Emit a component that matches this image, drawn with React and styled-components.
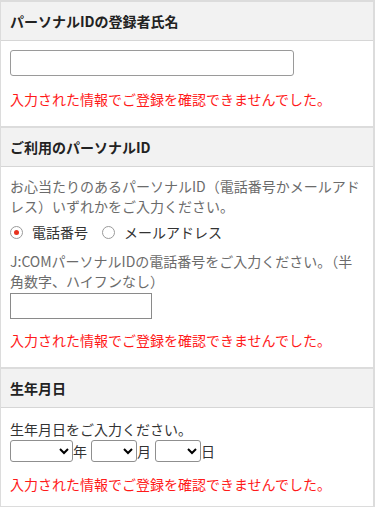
import React from "react";
import styled, { createGlobalStyle } from "styled-components";

const Global = createGlobalStyle`
  html, body { margin: 0; padding: 0; background: #fff; }
  body { font-family: "Noto Sans CJK JP", "Noto Sans", sans-serif; }
  * { box-sizing: border-box; }
`;

const Page = styled.div`
  width: 375px;
  border-left: 1px solid #dcdcdc;
  border-right: 2px solid #dcdcdc;
  border-bottom: 2px solid #dcdcdc;
`;

const Section = styled.section`
  border-top: 2px solid #dcdcdc;
  background: #fff;
`;

const Header = styled.h2`
  margin: 0;
  height: 39px;
  padding: 0 9px;
  display: flex;
  align-items: center;
  background: #f2f2f2;
  border-bottom: 1px solid #d6d6d6;
  font-size: 14px;
  font-weight: 700;
  color: #222;
  line-height: 20px;
`;

const Body = styled.div`
  padding: ${(p) => p.$pad || "9px 9px 16px"};
`;

const Note = styled.p`
  margin: 0;
  font-size: 14px;
  line-height: 20px;
  color: ${(p) => (p.$dark ? "#333" : "#6b6b6b")};
`;

const Error = styled.p`
  margin: ${(p) => p.$mt || "12px"} 0 0;
  font-size: 14px;
  line-height: 20px;
  color: #ff1a1a;
`;

const TextInput = styled.input`
  display: block;
  width: ${(p) => p.$w}px;
  height: 26px;
  margin: ${(p) => p.$mt || 0}px 0 0;
  padding: 2px 6px;
  border: 1px solid ${(p) => (p.$square ? "#8a8a8a" : "#9a9a9a")};
  border-radius: ${(p) => (p.$square ? "0" : "3px")};
  background: #fff;
  font-size: 14px;
  outline: none;
`;

const RadioRow = styled.div`
  display: flex;
  align-items: center;
  gap: 14px;
  height: 30px;
  margin: 1px 0 4px;
`;

const RadioLabel = styled.label`
  display: flex;
  align-items: center;
  gap: 9px;
  font-size: 14px;
  color: #333;
  line-height: 20px;
`;

const Radio = styled.span`
  width: 13px;
  height: 13px;
  border-radius: 50%;
  border: 1px solid #9a9a9a;
  background: #fff;
  display: inline-flex;
  align-items: center;
  justify-content: center;
  flex: none;
  &::after {
    content: "";
    width: 5px;
    height: 5px;
    border-radius: 50%;
    background: ${(p) => (p.$checked ? "#e8321e" : "transparent")};
  }
`;

const DateRow = styled.div`
  display: flex;
  align-items: center;
  height: 22px;
  margin-top: 1px;
`;

const Select = styled.select`
  width: ${(p) => p.$w}px;
  height: 22px;
  margin: 0;
  border: 1px solid #8f8f8f;
  border-radius: 3px;
  background: #fff;
  font-size: 13px;
`;

const Unit = styled.span`
  font-size: 14px;
  color: #333;
  line-height: 20px;
  margin: 0 ${(p) => p.$mr || 4}px 0 0;
`;

export default function App() {
  const err = "入力された情報でご登録を確認できませんでした。";
  return (
    <>
      <Global />
      <Page>
        <Section>
          <Header>パーソナルIDの登録者氏名</Header>
          <Body $pad="9px 9px 17px">
            <TextInput type="text" $w={284} />
            <Error $mt="13px">{err}</Error>
          </Body>
        </Section>
        <Section>
          <Header>ご利用のパーソナルID</Header>
          <Body $pad="9px 9px 17px">
            <Note>
              お心当たりのあるパーソナルID（電話番号かメールアドレス）いずれかをご入力ください。
            </Note>
            <RadioRow>
              <RadioLabel>
                <Radio $checked />
                電話番号
              </RadioLabel>
              <RadioLabel>
                <Radio />
                メールアドレス
              </RadioLabel>
            </RadioRow>
            <Note>J:COMパーソナルIDの電話番号をご入力ください。（半角数字、ハイフンなし）</Note>
            <TextInput type="text" $w={142} $square $mt={2} />
            <Error $mt="11px">{err}</Error>
          </Body>
        </Section>
        <Section>
          <Header>生年月日</Header>
          <Body $pad="11px 9px 12px">
            <Note $dark>生年月日をご入力ください。</Note>
            <DateRow>
              <Select $w={63}>
                <option></option>
              </Select>
              <Unit $mr={4}>年</Unit>
              <Select $w={46}>
                <option></option>
              </Select>
              <Unit $mr={4}>月</Unit>
              <Select $w={46}>
                <option></option>
              </Select>
              <Unit>日</Unit>
            </DateRow>
            <Error $mt="12px">{err}</Error>
          </Body>
        </Section>
      </Page>
    </>
  );
}
